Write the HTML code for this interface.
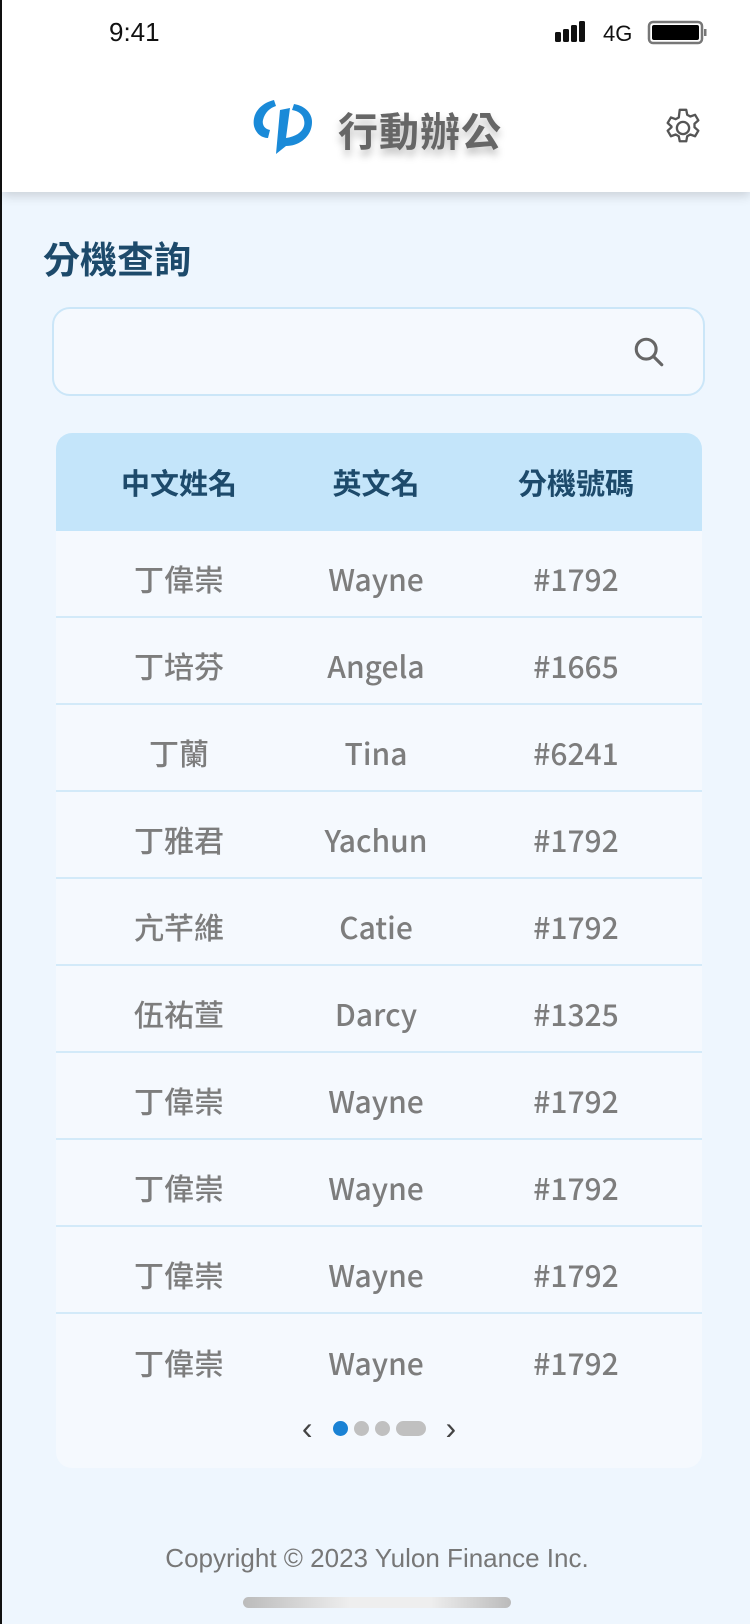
<!DOCTYPE html>
<html><head><meta charset="utf-8">
<style>
*{margin:0;padding:0;box-sizing:border-box}
html,body{width:750px;height:1624px;overflow:hidden}
body{background:#eef6fe;font-family:"Liberation Sans","Noto Sans CJK TC",sans-serif;position:relative;border-left:2px solid #111}
.hdr{position:absolute;left:0;top:0;width:748px;height:192px;background:#fff;box-shadow:0 4px 10px rgba(0,0,0,.15)}
.time{position:absolute;left:107px;top:17px;font-size:26px;color:#111}
.title{position:absolute;left:336px;top:100px;font-size:40px;color:#666;font-weight:bold;letter-spacing:1px;text-shadow:0 6px 8px rgba(0,0,0,.25)}
h1{position:absolute;left:41px;top:230px;font-size:37px;color:#1d4a6b;font-weight:bold}
.search{position:absolute;left:50px;top:307px;width:653px;height:89px;border:2px solid #cbe6f8;border-radius:18px;background:#f5f9fe}
.tbl{position:absolute;left:54px;top:433px;width:646px;height:1035px;background:#f5f9fe;border-radius:16px;overflow:hidden}
.th{height:98px;background:#c4e5fa;display:flex;align-items:center;font-size:29px;font-weight:bold;color:#1d4a6b}
.row{height:87px;display:flex;align-items:center;padding-top:8px;border-bottom:2px solid #d3eaf9;font-family:"Noto Sans CJK TC",sans-serif;font-size:30px;font-weight:500;color:#7d7d7d}
.row.last{border-bottom:none}
.c1{width:246px;text-align:center}.c2{width:148px;text-align:center}.c3{width:252px;text-align:center}
.pg{position:absolute;left:0;right:0;top:980px;height:30px;display:flex;justify-content:center;align-items:center;gap:6px}
.dot{width:15px;height:15px;border-radius:50%;background:#c0c0c0}
.copy{position:absolute;left:0;width:750px;top:1543px;text-align:center;font-size:26px;color:#777}
.home{position:absolute;left:241px;top:1597px;width:268px;height:11px;border-radius:6px;background:linear-gradient(90deg,#bbb,#eee 40%,#eee 70%,#bbb)}
</style></head><body>
<div class="hdr">
<div class="time">9:41</div>
<svg style="position:absolute;left:553px;top:20px" width="155" height="26" viewBox="0 0 155 26">
<rect x="0" y="12" width="6" height="10" rx="1.5" fill="#111"/><rect x="8" y="9" width="6" height="13" rx="1.5" fill="#111"/><rect x="16" y="5" width="6" height="17" rx="1.5" fill="#111"/><rect x="24" y="1" width="6" height="21" rx="1.5" fill="#111"/>
<text x="48" y="21" font-size="22" font-family="Liberation Sans" fill="#111">4G</text>
<rect x="94" y="2" width="53" height="21" rx="4" fill="none" stroke="#777" stroke-width="2.5"/><rect x="97" y="5" width="47" height="15" rx="2" fill="#000"/><rect x="149" y="9" width="2.5" height="7" fill="#777"/>
</svg>
<svg style="position:absolute;left:248px;top:94px" width="64" height="64" viewBox="0 0 64 64">
<path d="M24 6 C8 10 2 22 4 32 C6 40 12 44 18 44 L20 36 C14 35 12 30 13 26 C15 18 20 14 26 12 Z" fill="#1a8ad8"/>
<path d="M30 16 L40 14 L36 44 C50 42 56 34 54 26 C53 20 48 17 42 16 L44 10 C56 12 62 20 62 28 C62 42 50 52 36 52 L26 60 Z" fill="#1a8ad8"/>
</svg>
<div class="title">行動辦公</div>
<svg style="position:absolute;left:658px;top:105px" width="46" height="46" viewBox="0 0 24 24" fill="none" stroke="#555" stroke-width="1.2" stroke-linejoin="round">
<path d="M10.3 2.5h3.4l.5 2.6 1.6.9 2.5-.9 1.7 2.9-2 1.8v1.8l2 1.8-1.7 2.9-2.5-.9-1.6.9-.5 2.6h-3.4l-.5-2.6-1.6-.9-2.5.9-1.7-2.9 2-1.8V11.2l-2-1.8 1.7-2.9 2.5.9 1.6-.9z"/>
<circle cx="12" cy="12" r="3.2"/>
</svg>
</div>
<h1>分機查詢</h1>
<div class="search">
<svg style="position:absolute;left:578px;top:26px" width="34" height="34" viewBox="0 0 24 24" fill="none" stroke="#666" stroke-width="2.2" stroke-linecap="round"><circle cx="10" cy="10" r="7"/><path d="M15 15l6 6"/></svg>
</div>
<div class="tbl">
<div class="th"><div class="c1">中文姓名</div><div class="c2">英文名</div><div class="c3">分機號碼</div></div>
<div class="row"><div class="c1">丁偉崇</div><div class="c2">Wayne</div><div class="c3">#1792</div></div>
<div class="row"><div class="c1">丁培芬</div><div class="c2">Angela</div><div class="c3">#1665</div></div>
<div class="row"><div class="c1">丁蘭</div><div class="c2">Tina</div><div class="c3">#6241</div></div>
<div class="row"><div class="c1">丁雅君</div><div class="c2">Yachun</div><div class="c3">#1792</div></div>
<div class="row"><div class="c1">亢芊維</div><div class="c2">Catie</div><div class="c3">#1792</div></div>
<div class="row"><div class="c1">伍祐萱</div><div class="c2">Darcy</div><div class="c3">#1325</div></div>
<div class="row"><div class="c1">丁偉崇</div><div class="c2">Wayne</div><div class="c3">#1792</div></div>
<div class="row"><div class="c1">丁偉崇</div><div class="c2">Wayne</div><div class="c3">#1792</div></div>
<div class="row"><div class="c1">丁偉崇</div><div class="c2">Wayne</div><div class="c3">#1792</div></div>
<div class="row last"><div class="c1">丁偉崇</div><div class="c2">Wayne</div><div class="c3">#1792</div></div>
<div class="pg">
<span style="font-size:32px;color:#444;margin-right:14px;line-height:30px">‹</span>
<div class="dot" style="background:#1a82d4"></div><div class="dot"></div><div class="dot"></div><div class="dot" style="width:30px;border-radius:8px"></div>
<span style="font-size:32px;color:#444;margin-left:14px;line-height:30px">›</span>
</div>
</div>
<div class="copy">Copyright © 2023 Yulon Finance Inc.</div>
<div class="home"></div>
</body></html>
